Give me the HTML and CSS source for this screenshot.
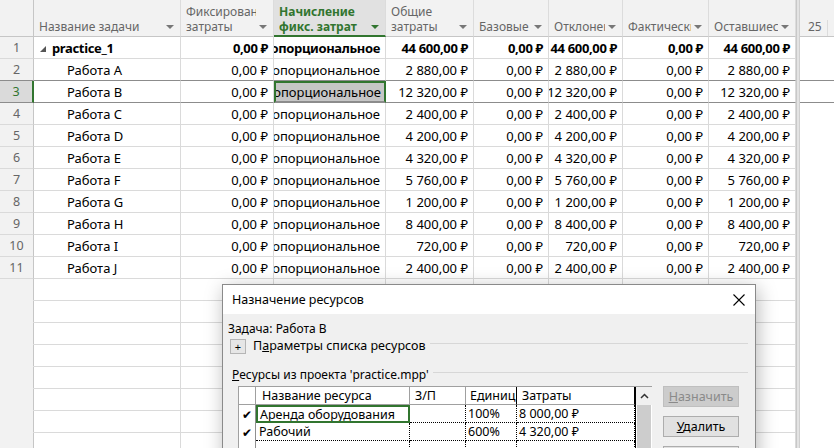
FILE: index.html
```html
<!DOCTYPE html>
<html lang="ru">
<head>
<meta charset="utf-8">
<title>Project</title>
<link rel="stylesheet" href="styles.css">
</head>
<body>
<div class="app">
  <div class="sheet">
    <div class="hrow">
      <div class="hc corner"></div>
      <div class="hc"><span class="lbl">Название задачи</span><i class="dd"></i></div>
      <div class="hc"><span class="lbl">Фиксированные<br>затраты</span><i class="dd"></i></div>
      <div class="hc hsel"><span class="lbl">Начисление<br>фикс. затрат</span><i class="dd"></i></div>
      <div class="hc"><span class="lbl">Общие<br>затраты</span><i class="dd"></i></div>
      <div class="hc"><span class="lbl">Базовые</span><i class="dd"></i></div>
      <div class="hc"><span class="lbl">Отклонение</span><i class="dd"></i></div>
      <div class="hc"><span class="lbl">Фактические</span><i class="dd"></i></div>
      <div class="hc"><span class="lbl">Оставшиеся</span><i class="dd"></i></div>
    </div>
    <div class="row bold">
      <div class="c num">1</div>
      <div class="c name"><span class="tri"></span>practice_1</div>
      <div class="c r">0,00&nbsp;₽</div>
      <div class="c r">Пропорциональное</div>
      <div class="c r">44&nbsp;600,00&nbsp;₽</div>
      <div class="c r">0,00&nbsp;₽</div>
      <div class="c r">44&nbsp;600,00&nbsp;₽</div>
      <div class="c r">0,00&nbsp;₽</div>
      <div class="c r">44&nbsp;600,00&nbsp;₽</div>
    </div>
    <div class="row pre">
      <div class="c num">2</div>
      <div class="c sub">Работа A</div>
      <div class="c r">0,00&nbsp;₽</div>
      <div class="c r">Пропорциональное</div>
      <div class="c r">2&nbsp;880,00&nbsp;₽</div>
      <div class="c r">0,00&nbsp;₽</div>
      <div class="c r">2&nbsp;880,00&nbsp;₽</div>
      <div class="c r">0,00&nbsp;₽</div>
      <div class="c r">2&nbsp;880,00&nbsp;₽</div>
    </div>
    <div class="row sel">
      <div class="c num">3</div>
      <div class="c sub">Работа B</div>
      <div class="c r">0,00&nbsp;₽</div>
      <div class="c r active">Пропорциональное</div>
      <div class="c r">12&nbsp;320,00&nbsp;₽</div>
      <div class="c r">0,00&nbsp;₽</div>
      <div class="c r">12&nbsp;320,00&nbsp;₽</div>
      <div class="c r">0,00&nbsp;₽</div>
      <div class="c r">12&nbsp;320,00&nbsp;₽</div>
    </div>
    <div class="row">
      <div class="c num">4</div>
      <div class="c sub">Работа C</div>
      <div class="c r">0,00&nbsp;₽</div>
      <div class="c r">Пропорциональное</div>
      <div class="c r">2&nbsp;400,00&nbsp;₽</div>
      <div class="c r">0,00&nbsp;₽</div>
      <div class="c r">2&nbsp;400,00&nbsp;₽</div>
      <div class="c r">0,00&nbsp;₽</div>
      <div class="c r">2&nbsp;400,00&nbsp;₽</div>
    </div>
    <div class="row">
      <div class="c num">5</div>
      <div class="c sub">Работа D</div>
      <div class="c r">0,00&nbsp;₽</div>
      <div class="c r">Пропорциональное</div>
      <div class="c r">4&nbsp;200,00&nbsp;₽</div>
      <div class="c r">0,00&nbsp;₽</div>
      <div class="c r">4&nbsp;200,00&nbsp;₽</div>
      <div class="c r">0,00&nbsp;₽</div>
      <div class="c r">4&nbsp;200,00&nbsp;₽</div>
    </div>
    <div class="row">
      <div class="c num">6</div>
      <div class="c sub">Работа E</div>
      <div class="c r">0,00&nbsp;₽</div>
      <div class="c r">Пропорциональное</div>
      <div class="c r">4&nbsp;320,00&nbsp;₽</div>
      <div class="c r">0,00&nbsp;₽</div>
      <div class="c r">4&nbsp;320,00&nbsp;₽</div>
      <div class="c r">0,00&nbsp;₽</div>
      <div class="c r">4&nbsp;320,00&nbsp;₽</div>
    </div>
    <div class="row">
      <div class="c num">7</div>
      <div class="c sub">Работа F</div>
      <div class="c r">0,00&nbsp;₽</div>
      <div class="c r">Пропорциональное</div>
      <div class="c r">5&nbsp;760,00&nbsp;₽</div>
      <div class="c r">0,00&nbsp;₽</div>
      <div class="c r">5&nbsp;760,00&nbsp;₽</div>
      <div class="c r">0,00&nbsp;₽</div>
      <div class="c r">5&nbsp;760,00&nbsp;₽</div>
    </div>
    <div class="row">
      <div class="c num">8</div>
      <div class="c sub">Работа G</div>
      <div class="c r">0,00&nbsp;₽</div>
      <div class="c r">Пропорциональное</div>
      <div class="c r">1&nbsp;200,00&nbsp;₽</div>
      <div class="c r">0,00&nbsp;₽</div>
      <div class="c r">1&nbsp;200,00&nbsp;₽</div>
      <div class="c r">0,00&nbsp;₽</div>
      <div class="c r">1&nbsp;200,00&nbsp;₽</div>
    </div>
    <div class="row">
      <div class="c num">9</div>
      <div class="c sub">Работа H</div>
      <div class="c r">0,00&nbsp;₽</div>
      <div class="c r">Пропорциональное</div>
      <div class="c r">8&nbsp;400,00&nbsp;₽</div>
      <div class="c r">0,00&nbsp;₽</div>
      <div class="c r">8&nbsp;400,00&nbsp;₽</div>
      <div class="c r">0,00&nbsp;₽</div>
      <div class="c r">8&nbsp;400,00&nbsp;₽</div>
    </div>
    <div class="row">
      <div class="c num">10</div>
      <div class="c sub">Работа I</div>
      <div class="c r">0,00&nbsp;₽</div>
      <div class="c r">Пропорциональное</div>
      <div class="c r">720,00&nbsp;₽</div>
      <div class="c r">0,00&nbsp;₽</div>
      <div class="c r">720,00&nbsp;₽</div>
      <div class="c r">0,00&nbsp;₽</div>
      <div class="c r">720,00&nbsp;₽</div>
    </div>
    <div class="row">
      <div class="c num">11</div>
      <div class="c sub">Работа J</div>
      <div class="c r">0,00&nbsp;₽</div>
      <div class="c r">Пропорциональное</div>
      <div class="c r">2&nbsp;400,00&nbsp;₽</div>
      <div class="c r">0,00&nbsp;₽</div>
      <div class="c r">2&nbsp;400,00&nbsp;₽</div>
      <div class="c r">0,00&nbsp;₽</div>
      <div class="c r">2&nbsp;400,00&nbsp;₽</div>
    </div>
    <div class="row empty"><div class="c num"></div><div class="c"></div><div class="c"></div><div class="c"></div><div class="c"></div><div class="c"></div><div class="c"></div><div class="c"></div><div class="c"></div></div>
    <div class="row empty"><div class="c num"></div><div class="c"></div><div class="c"></div><div class="c"></div><div class="c"></div><div class="c"></div><div class="c"></div><div class="c"></div><div class="c"></div></div>
    <div class="row empty"><div class="c num"></div><div class="c"></div><div class="c"></div><div class="c"></div><div class="c"></div><div class="c"></div><div class="c"></div><div class="c"></div><div class="c"></div></div>
    <div class="row empty"><div class="c num"></div><div class="c"></div><div class="c"></div><div class="c"></div><div class="c"></div><div class="c"></div><div class="c"></div><div class="c"></div><div class="c"></div></div>
    <div class="row empty"><div class="c num"></div><div class="c"></div><div class="c"></div><div class="c"></div><div class="c"></div><div class="c"></div><div class="c"></div><div class="c"></div><div class="c"></div></div>
    <div class="row empty"><div class="c num"></div><div class="c"></div><div class="c"></div><div class="c"></div><div class="c"></div><div class="c"></div><div class="c"></div><div class="c"></div><div class="c"></div></div>
    <div class="row empty"><div class="c num"></div><div class="c"></div><div class="c"></div><div class="c"></div><div class="c"></div><div class="c"></div><div class="c"></div><div class="c"></div><div class="c"></div></div>
    <div class="row empty"><div class="c num"></div><div class="c"></div><div class="c"></div><div class="c"></div><div class="c"></div><div class="c"></div><div class="c"></div><div class="c"></div><div class="c"></div></div>
  </div>
  <div class="splitter"></div>
  <div class="gantt">
    <div class="ghead"><span class="day">25</span><span class="tick"></span></div>
    <div class="grow"></div>
    <div class="grow pre"></div>
    <div class="grow sel"></div>
  </div>

  <div class="dialog">
    <div class="dtitle">
      <span>Назначение ресурсов</span>
      <svg class="close" width="12" height="12" viewBox="0 0 12 12"><path d="M0.5 0.5 L11.5 11.5 M11.5 0.5 L0.5 11.5" stroke="#000" stroke-width="1.1" fill="none"/></svg>
    </div>
    <div class="dbody">
      <div class="task">Задача: Работа B</div>
      <div class="opts">
        <span class="plus">+</span>
        <span class="optlbl">П<u>а</u>раметры списка ресурсов</span>
        <span class="rule"></span>
      </div>
      <div class="reshead">
        <span><u>Р</u>есурсы из проекта 'practice.mpp'</span>
        <span class="rule"></span>
      </div>
      <div class="resarea">
        <div class="rtable">
          <div class="rgrid">
            <div class="rh chk"></div>
            <div class="rh">Название ресурса</div>
            <div class="rh">З/П</div>
            <div class="rh">Единицы</div>
            <div class="rh dark">Затраты</div>

            <div class="rc chk">✔</div>
            <div class="rc nm focus">Аренда оборудования</div>
            <div class="rc"></div>
            <div class="rc">100%</div>
            <div class="rc">8&nbsp;000,00&nbsp;₽</div>

            <div class="rc chk">✔</div>
            <div class="rc nm">Рабочий</div>
            <div class="rc"></div>
            <div class="rc">600%</div>
            <div class="rc">4&nbsp;320,00&nbsp;₽</div>

            <div class="rc chk"></div>
            <div class="rc nm"></div>
            <div class="rc"></div>
            <div class="rc"></div>
            <div class="rc"></div>
          </div>
          <div class="vscroll">
            <div class="sup"><svg width="9" height="6" viewBox="0 0 9 6"><path d="M1 5 L4.5 1.5 L8 5" stroke="#333" stroke-width="1.5" fill="none"/></svg></div>
            <div class="thumb"></div>
          </div>
        </div>
        <div class="btns">
          <div class="btn dis"><span><u>Н</u>азначить</span></div>
          <div class="btn"><span><u>У</u>далить</span></div>
          <div class="btn"></div>
        </div>
      </div>
    </div>
  </div>
</div>
</body>
</html>
```

FILE: styles.css
```css
:root {
  --cols: 34px 147px 93px 112px 88px 75px 74px 86px 87px;
  --green: #31752f;
  --line: #dadada;
}
* { box-sizing: border-box; }
html, body {
  margin: 0;
  background: #fff;
  overflow: hidden;
}
body {
  font-family: "Segoe UI", "Noto Sans", "DejaVu Sans", sans-serif;
  color: #000;
}
.app {
  display: flex;
  width: 834px;
  height: 448px;
  position: relative;
  overflow: hidden;
}
.sheet {
  width: 796px;
  flex: none;
  display: flex;
  flex-direction: column;
}
.hrow {
  display: grid;
  grid-template-columns: var(--cols);
  height: 37px;
  flex: none;
}
.hc {
  background: #f2f2f2;
  border-right: 1px solid #dcdcdc;
  border-bottom: 1px solid #c6c6c6;
  display: flex;
  align-items: flex-end;
  padding: 0 6px 0 5px;
  font-size: 12px;
  line-height: 15px;
  color: #666;
  overflow: hidden;
}
.hc.corner { border-right-color: #c6c6c6; }
.lbl {
  flex: 1;
  min-width: 0;
  white-space: nowrap;
  overflow: hidden;
  padding-bottom: 2px;
}
.dd {
  flex: none;
  width: 0;
  height: 0;
  border-left: 4px solid transparent;
  border-right: 4px solid transparent;
  border-top: 4px solid #777;
  margin: 0 0 7px 3px;
}
.hsel {
  background: #e1e1e1;
  color: var(--green);
  font-weight: bold;
  border-bottom: 2px solid var(--green);
}
.hsel .lbl { padding-bottom: 1px; }
.hsel .dd { border-top-color: var(--green); margin-bottom: 6px; }

.row {
  display: grid;
  grid-template-columns: var(--cols);
  height: 22px;
  flex: none;
}
.c {
  border-right: 1px solid var(--line);
  border-bottom: 1px solid var(--line);
  display: flex;
  align-items: center;
  padding: 0 5px;
  font-size: 13px;
  white-space: nowrap;
  overflow: hidden;
}
.c.r { justify-content: flex-end; }
.c.num {
  background: #f2f2f2;
  color: #666;
  justify-content: center;
  border-right-color: #c6c6c6;
  border-bottom-color: var(--line);
  font-size: 12.5px;
}
.bold .c { font-weight: bold; letter-spacing: -0.35px; }
.bold .c.num { font-weight: normal; letter-spacing: 0; }
.c.name { padding-left: 5px; }
.c.sub { padding-left: 33px; }
.tri {
  width: 0;
  height: 0;
  border-left: 6px solid transparent;
  border-bottom: 6px solid #555;
  margin: 2px 6px 0 1px;
}
.row.pre .c { border-bottom-color: #8c8c8c; }
.row.sel .c { border-bottom-color: #8c8c8c; }
.row.sel .c.num {
  background: #dadada;
  color: var(--green);
  border-right: 2px solid var(--green);
}
.c.active {
  background: #c6c6c6;
  border: 2px solid var(--green);
  padding-right: 3px;
}
.row.empty .c.num { border-bottom-color: #f2f2f2; }

.splitter {
  width: 4px;
  flex: none;
  background: #e3e3e3;
  border-left: 1px solid #c8c8c8;
  border-right: 1px solid #cfcfcf;
}
.gantt {
  flex: 1;
  display: flex;
  flex-direction: column;
}
.ghead {
  height: 37px;
  flex: none;
  background: #f2f2f2;
  border-bottom: 1px solid #c6c6c6;
  display: flex;
  align-items: flex-end;
  padding: 0 0 2px 8px;
  font-size: 12px;
  line-height: 15px;
  color: #666;
}
.day { width: 19px; }
.tick {
  width: 1px;
  height: 16px;
  background: #dcdcdc;
  margin-bottom: -2px;
}
.grow {
  height: 22px;
  flex: none;
  border-bottom: 1px solid transparent;
}
.grow.pre, .grow.sel { border-bottom-color: #8c8c8c; }

/* dialog */
.dialog {
  position: absolute;
  left: 222px;
  top: 284px;
  width: 534px;
  height: 190px;
  background: #f0f0f0;
  border: 1px solid #8a8a8a;
  box-shadow: 2px 4px 18px rgba(0, 0, 0, 0.28);
  font-size: 12px;
  display: flex;
  flex-direction: column;
}
.dtitle {
  height: 29px;
  flex: none;
  background: #fff;
  display: flex;
  align-items: center;
  justify-content: space-between;
  padding: 0 10px 0 9px;
  font-size: 12.5px;
}
.close { display: block; }
.dbody {
  padding: 7px 7px 0 5px;
  display: flex;
  flex-direction: column;
}
.task { line-height: 16px; height: 16px; }
.opts {
  display: flex;
  align-items: center;
  height: 17px;
}
.plus {
  width: 16px;
  height: 15px;
  border: 1px solid #b5b5b5;
  background: #e6e6e6;
  font-size: 11px;
  line-height: 12px;
  display: flex;
  align-items: center;
  justify-content: center;
  margin-left: 2px;
  margin-top: 2px;
}
.optlbl { margin-left: 7px; font-size: 12.5px; }
.rule {
  flex: 1;
  height: 1px;
  background: #d7d7d7;
  margin-left: 4px;
  align-self: center;
  position: relative;
  top: -2px;
}
.reshead {
  display: flex;
  align-items: center;
  margin-top: 12px;
  height: 17px;
  padding-left: 4px;
}
.resarea {
  display: flex;
  margin-top: 3px;
  padding-left: 10px;
}
.rtable {
  display: flex;
  border-top: 1px solid #a0a0a0;
  border-left: 1px solid #a0a0a0;
  background: #fff;
  height: 80px;
}
.rgrid {
  display: grid;
  grid-template-columns: 17px 154px 56px 51px 118px;
  grid-auto-rows: 18px;
  align-content: start;
}
.rh {
  border-right: 1px solid #a0a0a0;
  border-bottom: 1px solid #a0a0a0;
  padding: 0 5px;
  display: flex;
  align-items: center;
  white-space: nowrap;
  overflow: hidden;
  font-size: 12.5px;
}
.rh.dark { border-right-color: #000; }
.rh:nth-child(4) { border-right-color: #000; padding-left: 4px; }
.rh:nth-child(2) { padding-left: 6px; }
.rc {
  border-right: 1px dotted #000;
  border-bottom: 1px dotted #000;
  padding: 0 2px;
  display: flex;
  align-items: center;
  white-space: nowrap;
  overflow: hidden;
  font-size: 12.5px;
}
.rc.chk {
  border-right: 1px solid #8f8f8f;
  border-bottom: none;
  justify-content: center;
  font-size: 12px;
}
.rc.nm { padding-left: 3px; }
.rc.focus {
  border: 2px solid var(--green);
  padding-left: 2px;
}
.vscroll {
  width: 17px;
  display: flex;
  flex-direction: column;
  border-left: 1px solid #000;
}
.sup {
  height: 18px;
  display: flex;
  align-items: center;
  justify-content: center;
  background: #f0f0f0;
}
.thumb {
  flex: 1;
  background: #cdcdcd;
  margin: 0 1px;
}
.btns {
  margin-left: 11px;
  display: flex;
  flex-direction: column;
  gap: 9px;
}
.btn {
  width: 76px;
  height: 21px;
  border: 1px solid #adadad;
  background: #e1e1e1;
  display: flex;
  align-items: center;
  justify-content: center;
  font-size: 12.5px;
}
.btn.dis {
  background: #cccccc;
  border-color: #bfbfbf;
  color: #8a8a8a;
}
```
